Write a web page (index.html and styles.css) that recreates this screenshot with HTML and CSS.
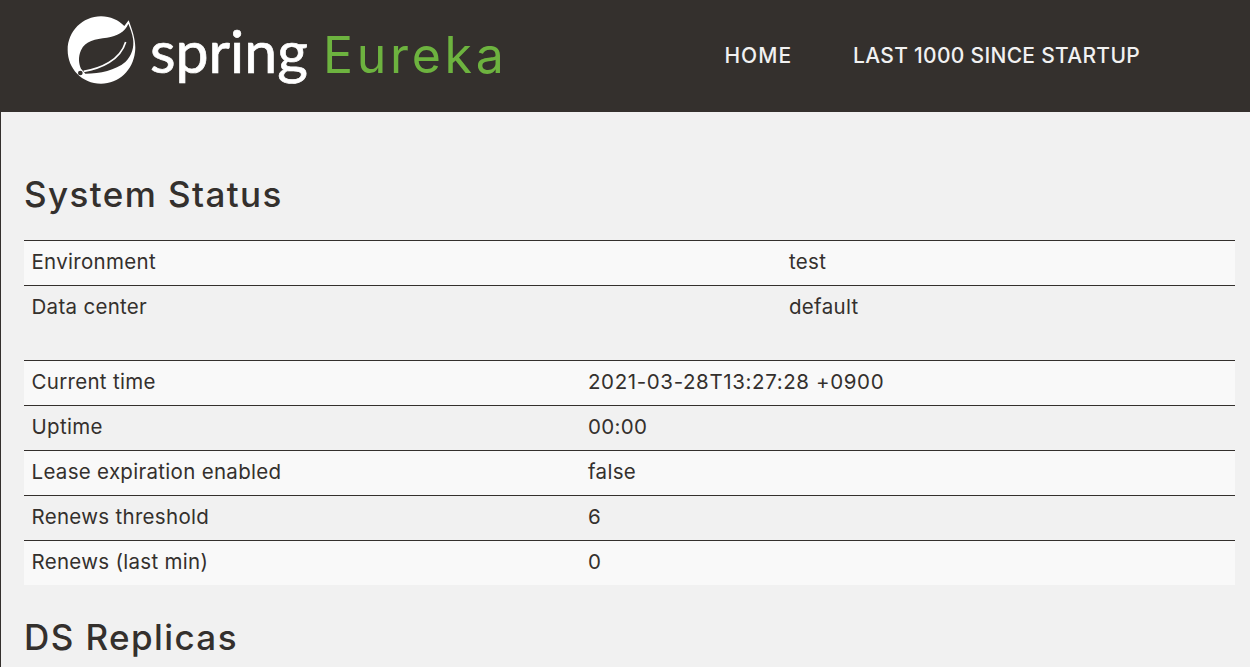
FILE: index.html
```
<!DOCTYPE html>
<html>
<head>
	<meta charset="utf-8" />
	<title>Eureka</title>
	<link rel="stylesheet" href="styles.css">
</head>
<body>
	<nav class="navbar">
		<a class="brand" href="#">
			<svg class="leaf" width="69" height="69" viewBox="50 32 207 207">
				<path fill="#fff" d="M235 45C248 80 258 110 254 140C248 195 205 235 152 235C95 235 52 190 52 134C52 78 97 33 152 33C180 33 205 45 222 62Z"/>
				<path fill="#34302d" d="M234 55C224 80 200 92 170 97C135 102 105 105 92 135C83 155 85 175 92 190L105 205C150 205 195 195 225 170C245 150 252 125 248 100C246 85 240 70 234 55Z"/>
				<path fill="none" stroke="#fff" stroke-width="5" d="M100 198C150 190 210 165 226 110"/>
				<circle cx="90" cy="203" r="7" fill="#34302d"/>
			</svg>
			<span class="brand-text">
				<span class="brand-spring">spring</span>
				<span class="brand-eureka">Eureka</span>
			</span>
		</a>
		<ul class="menu">
			<li><a class="home" href="#">HOME</a></li>
			<li><a href="#">LAST 1000 SINCE STARTUP</a></li>
		</ul>
	</nav>
	<div class="content">
		<h1>System Status</h1>
		<table class="status env">
			<tr><td class="name">Environment</td><td>test</td></tr>
			<tr><td class="name">Data center</td><td>default</td></tr>
		</table>
		<table class="status stats">
			<tr><td class="name">Current time</td><td class="date">2021-03-28T13:27:28 +0900</td></tr>
			<tr><td class="name">Uptime</td><td>00:00</td></tr>
			<tr><td class="name">Lease expiration enabled</td><td>false</td></tr>
			<tr><td class="name">Renews threshold</td><td>6</td></tr>
			<tr><td class="name">Renews (last min)</td><td>0</td></tr>
		</table>
		<h1 class="replicas">DS Replicas</h1>
	</div>
</body>
</html>
```

FILE: styles.css
```
html, body {
	margin: 0;
	padding: 0;
	height: 100%;
}
body {
	overflow: hidden;
	background-color: #f1f1f1;
	border-left: 1px solid #34302d;
	color: #34302d;
	font-family: "Inter", "Liberation Sans", sans-serif;
	font-size: 20.5px;
	letter-spacing: 0.3px;
}
a {
	text-decoration: none;
	color: #f1f1f1;
}
.navbar {
	height: 112px;
	background-color: #34302d;
	display: flex;
	align-items: center;
	justify-content: space-between;
}
.brand {
	display: flex;
	align-items: center;
	margin: 0 0 12px 66px;
}
.leaf {
	margin-right: 14px;
}
.brand-text {
	white-space: nowrap;
}
.brand-spring {
	color: #fff;
	font-family: "Lato", sans-serif;
	font-size: 59px;
	letter-spacing: 0;
	margin-right: 9px;
	-webkit-text-stroke: 0.7px #fff;
}
.brand-eureka {
	color: #6db33f;
	font-size: 50px;
	letter-spacing: 3.7px;
}
.menu {
	list-style: none;
	display: flex;
	gap: 61px;
	margin: 0 110px 2px 0;
	padding: 0;
}
.menu a {
	color: #f1f1f1;
	font-size: 21px;
	font-weight: 500;
}
.menu .home {
	letter-spacing: 1px;
}
.content {
	padding: 0 15px 0 23px;
}
h1 {
	margin: 0;
	font-size: 35px;
	font-weight: 500;
	letter-spacing: 1.4px;
	line-height: 40px;
	padding: 62px 0 26px;
}
h1.replicas {
	padding-top: 32px;
}
.status {
	width: 100%;
	border-collapse: collapse;
	table-layout: fixed;
	margin-bottom: 29px;
}
.status td {
	height: 45px;
	padding: 0 7.5px 2px;
	box-sizing: border-box;
	border-top: 1px solid #34302d;
}
.status tr:nth-child(odd) {
	background-color: #f9f9f9;
}
.env td {
	padding-bottom: 4px;
}
.env .name {
	width: 757.5px;
}
.stats .name {
	width: 556.5px;
}
.stats {
	margin-bottom: 0;
}
.date {
	letter-spacing: 0.62px;
}
```
